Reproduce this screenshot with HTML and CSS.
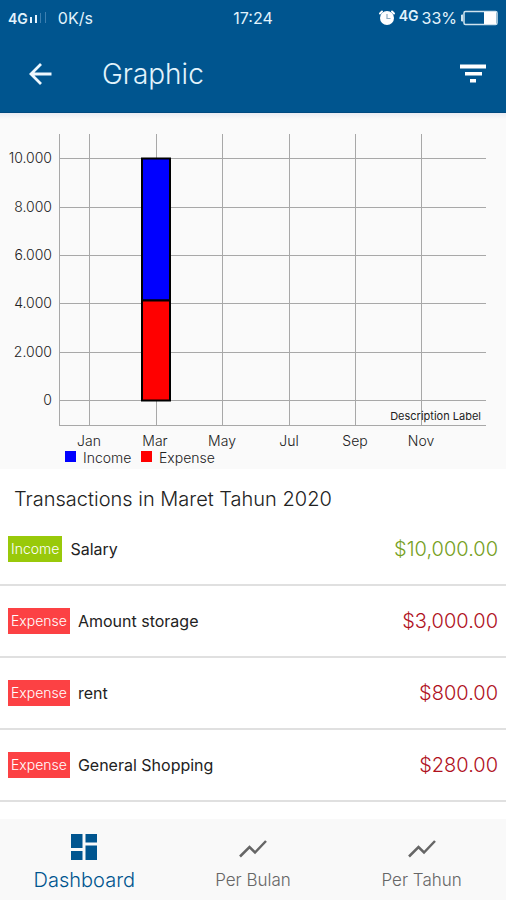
FILE: index.html
```html
<!DOCTYPE html>
<html lang="en">
<head>
<meta charset="utf-8">
<meta name="viewport" content="width=device-width, initial-scale=1">
<title>Graphic</title>
<link rel="stylesheet" href="styles.css">
</head>
<body>
<div class="app">
  <header class="header">
    <div class="status">
      <div class="status-side">
        <span class="network">4G</span>
        <svg class="signal" width="22" height="12" viewBox="0 0 22 12" aria-hidden="true">
          <path d="M2 5h2v6H2zM7 3h2v8H7z" fill="#e6f4ff"/>
          <path d="M12 1h1v10h-1zM17 0h1v11h-1z" fill="#3d7fb0"/>
        </svg>
        <span>0K/s</span>
      </div>
      <span class="clock">17:24</span>
      <div class="status-side status-right">
        <svg width="18" height="18" viewBox="0 0 18 18" aria-hidden="true">
          <circle cx="9" cy="9" r="7" fill="#fff"/>
          <path d="M2 4.500 4 2.500M14 2.500l2 2" stroke="#fff" stroke-width="2" stroke-linecap="round"/>
          <path d="M9 5v4.500h3.500" fill="none" stroke="#8aa9c0" stroke-width="1.200"/>
        </svg>
        <span class="network network-raised">4G</span>
        <span>33%</span>
        <svg width="38" height="16" viewBox="0 0 38 16" aria-hidden="true">
          <path d="M3 5H1.500v6H3" fill="#cfe3ee" stroke="#cfe3ee"/>
          <rect x="4" y="1.500" width="33" height="13" rx="1.500" fill="none" stroke="#cfe3ee" stroke-width="1.500"/>
          <path d="M24 2h12v12H24z" fill="#fff"/>
        </svg>
      </div>
    </div>
    <div class="toolbar">
      <button class="icon-button" type="button" aria-label="Back">
        <svg width="24" height="24" viewBox="0 0 24 24" fill="none" stroke="#eef8ff" stroke-width="2.800" aria-hidden="true"><path d="M23.500 12H3M13 2 3 12l10 10"/></svg>
      </button>
      <h1 class="title">Graphic</h1>
      <button class="icon-button" type="button" aria-label="Filter">
        <svg width="26" height="20" viewBox="0 0 26 20" fill="#fff" aria-hidden="true"><path d="M0 .5h26v4H0zM5 8h17v3.500H5zM10 15h6v3.500h-6z"/></svg>
      </button>
    </div>
  </header>

  <main class="content">
    <section class="chart-panel">
      <svg class="chart" viewBox="0 0 506 356" role="img" aria-label="Income and expense by month">
        <g class="grid">
          <path d="M59 45.500H486M59 94.500H486M59 142.500H486M59 190.500H486M59 239.500H486M59 287.500H486M59 312.500H486"/>
          <path d="M59.500 21V312M89.500 21V312M156.500 21V312M222.500 21V312M289.500 21V312M355.500 21V312M421.500 21V312"/>
        </g>
        <g class="bars">
          <rect x="142" y="45.500" width="28" height="142" fill="#00f"/>
          <rect x="142" y="187.500" width="28" height="100" fill="#f00"/>
        </g>
        <g class="axis-y">
          <text x="52" y="50">10.000</text>
          <text x="52" y="99">8.000</text>
          <text x="52" y="147">6.000</text>
          <text x="52" y="195">4.000</text>
          <text x="52" y="244">2.000</text>
          <text x="52" y="292">0</text>
        </g>
        <g class="axis-x">
          <text x="89" y="333">Jan</text>
          <text x="155" y="333">Mar</text>
          <text x="222" y="333">May</text>
          <text x="289" y="333">Jul</text>
          <text x="355" y="333">Sep</text>
          <text x="421" y="333">Nov</text>
        </g>
        <text class="description" x="481" y="307">Description Label</text>
        <path d="M65 338h11v11H65z" fill="#00f"/>
        <text x="83" y="350">Income</text>
        <path d="M141 338h11v11h-11z" fill="#f00"/>
        <text x="159" y="350">Expense</text>
      </svg>
    </section>

    <section>
      <h2 class="list-title">Transactions in Maret Tahun 2020</h2>
      <ul class="list">
        <li class="row"><span class="badge badge-income">Income</span><span class="name">Salary</span><span class="amount amount-income">$10,000.00</span></li>
        <li class="row"><span class="badge">Expense</span><span class="name">Amount storage</span><span class="amount">$3,000.00</span></li>
        <li class="row"><span class="badge">Expense</span><span class="name">rent</span><span class="amount">$800.00</span></li>
        <li class="row"><span class="badge">Expense</span><span class="name">General Shopping</span><span class="amount">$280.00</span></li>
      </ul>
    </section>
  </main>

  <nav class="tabs">
    <a class="tab tab-active" href="#dashboard" aria-current="page">
      <svg width="26" height="26" viewBox="0 0 26 26" fill="currentColor" aria-hidden="true"><path d="M0 0h11.500v14H0zM14.500 0H26v8.500H14.500zM0 17h11.500v9H0zM14.500 11.500H26V26H14.500z"/></svg>
      <span>Dashboard</span>
    </a>
    <a class="tab" href="#bulan">
      <svg width="28" height="26" viewBox="0 0 28 26" fill="none" stroke="currentColor" stroke-width="2.500" aria-hidden="true"><path d="M1 22.500 10.500 13l5.500 5.500L27 7"/></svg>
      <span>Per Bulan</span>
    </a>
    <a class="tab" href="#tahun">
      <svg width="28" height="26" viewBox="0 0 28 26" fill="none" stroke="currentColor" stroke-width="2.500" aria-hidden="true"><path d="M1 22.500 10.500 13l5.500 5.500L27 7"/></svg>
      <span>Per Tahun</span>
    </a>
  </nav>
</div>
</body>
</html>
```
FILE: styles.css
```css
* {
  box-sizing: border-box;
}

body {
  margin: 0;
  background: #fff;
  color: #222;
  font-family: Inter, Roboto, sans-serif;
  font-weight: 300;
}

.app {
  display: flex;
  flex-direction: column;
  min-height: 100vh;
}

.header {
  background: #00558f;
  color: #e2f3fc;
  border-bottom: 1px solid #004a80;
}

.status {
  display: grid;
  grid-template-columns: 1fr auto 1fr;
  align-items: center;
  height: 36px;
  padding: 0 8px;
  font-size: 16px;
  font-weight: 400;
}

.status-side {
  display: flex;
  align-items: center;
}

.status-right {
  justify-content: flex-end;
  gap: 3px;
}

.signal {
  margin-right: 8px;
}

.network {
  font-size: 14px;
  font-weight: 600;
}

.network-raised {
  padding-bottom: 6px;
}

.toolbar {
  display: flex;
  align-items: center;
  height: 76px;
  padding: 0 20px 0 28px;
}

.icon-button {
  display: flex;
  padding: 0;
  border: 0;
  background: none;
}

.title {
  flex: 1;
  margin: 0 0 0 50px;
  font-size: 28px;
  font-weight: 300;
}

.content {
  flex: 1;
}

.chart-panel {
  background: linear-gradient(#e9ecf3, #fafafa 6px);
}

.chart {
  display: block;
  width: 100%;
  fill: #222;
  font-size: 14px;
}

.grid {
  fill: none;
  stroke: #a8a8a8;
}

.bars {
  stroke: #000;
  stroke-width: 2px;
}

.axis-y,
.description {
  text-anchor: end;
}

.axis-x {
  text-anchor: middle;
}

.description {
  font-size: 11px;
  font-weight: 400;
}

.list-title {
  margin: 0;
  padding: 0 14px;
  font-size: 20px;
  font-weight: 300;
  line-height: 61px;
  height: 45px;
}

.list {
  margin: 0;
  padding: 0;
  list-style: none;
}

.row {
  display: flex;
  align-items: center;
  gap: 8px;
  height: 72px;
  padding: 0 8px;
  border-bottom: 2px solid #e0e0e0;
}

.badge {
  padding: 0 3px;
  background: #fc4144;
  color: #fff;
  font-size: 14px;
  line-height: 26px;
}

.badge-income {
  background: #99c90a;
}

.name {
  flex: 1;
  font-size: 16px;
  font-weight: 400;
}

.amount {
  color: #b0111d;
  font-size: 20px;
}

.amount-income {
  color: #76a01d;
}

.tabs {
  display: grid;
  grid-template-columns: repeat(3, 1fr);
  height: 81px;
  background: #f9f9f9;
}

.tab {
  display: flex;
  flex-direction: column;
  align-items: center;
  gap: 6px;
  padding-top: 15px;
  color: #666;
  font-size: 17px;
  line-height: 28px;
  text-decoration: none;
}

.tab-active {
  color: #00558f;
  font-size: 20px;
}
```
